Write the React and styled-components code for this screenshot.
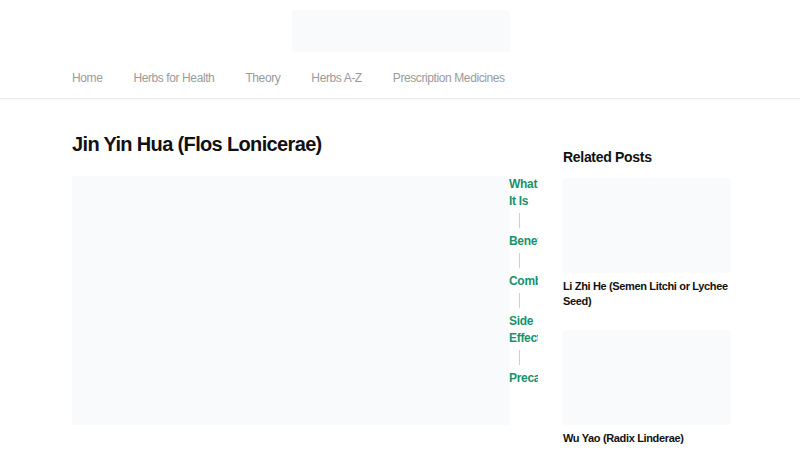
import styled, { createGlobalStyle } from 'styled-components'

const GlobalStyle = createGlobalStyle`
    body {
        margin: 0;
        background: #ffffff;
        font-family: "Liberation Sans", Arial, sans-serif;
    }
`;

const Header = styled.header`
    border-bottom: 1px solid #ececec;
    box-shadow: 0 1px 2px rgba(0, 0, 0, 0.03);
`;

const LogoRow = styled.div`
    display: flex;
    justify-content: center;
    padding-top: 10px;
`;

const Logo = styled.div`
    width: 218px;
    height: 42px;
    margin-left: 1px;
    background: #f9fafb;
    border-radius: 3px;
`;

const Nav = styled.nav`
    display: flex;
    gap: 31px;
    padding: 19px 0 0 72px;
    height: 27px;
`;

const NavLink = styled.a`
    color: #9a9a9a;
    font-size: 12px;
    line-height: 15px;
    letter-spacing: -0.4px;
    text-decoration: none;
`;

const Layout = styled.div`
    display: grid;
    grid-template-columns: 466px 168px;
    column-gap: 25px;
    margin-left: 72px;
    padding-top: 33px;
`;

const Title = styled.h1`
    margin: 0 0 20px;
    font-size: 20px;
    line-height: 24px;
    font-weight: 700;
    letter-spacing: -0.65px;
    color: #111111;
`;

const ContentRow = styled.div`
    display: grid;
    grid-template-columns: 437px 29px;
`;

const HeroImage = styled.div`
    height: 249px;
    background: #f9fafb;
`;

const Toc = styled.ul`
    list-style: none;
    margin: 0;
    padding: 0;
    overflow: hidden;
    display: flex;
    flex-direction: column;
`;

const TocItem = styled.li`
    color: #15936b;
    font-size: 12px;
    font-weight: 700;
    line-height: 17px;
    letter-spacing: -0.3px;
    white-space: ${props => props.$wrap ? 'normal' : 'nowrap'};
    width: 36px;
`;

const TocDivider = styled.li`
    width: 1px;
    height: 15px;
    margin: 3px 0 5px 10px;
    background: #cfcfcf;
`;

const Sidebar = styled.aside`
    padding-top: 17px;
`;

const SideTitle = styled.h2`
    margin: 0 0 12px;
    font-size: 14px;
    line-height: 17px;
    font-weight: 700;
    letter-spacing: -0.3px;
    color: #111111;
`;

const Card = styled.div`
    margin-bottom: 21px;
`;

const CardImage = styled.div`
    height: 95px;
    background: #f9fafb;
    border-radius: 3px;
`;

const CardTitle = styled.div`
    margin-top: 6px;
    font-size: 11px;
    line-height: 15px;
    font-weight: 700;
    letter-spacing: -0.35px;
    color: #111111;
`;

const navItems = ['Home', 'Herbs for Health', 'Theory', 'Herbs A-Z', 'Prescription Medicines']
const tocItems = ['What It Is', 'Benefits', 'Combinations', 'Side Effects', 'Precautions']
const related = ['Li Zhi He (Semen Litchi or Lychee Seed)', 'Wu Yao (Radix Linderae)']

export default function App() {
  return (
    <>
        <GlobalStyle />
        <Header>
            <LogoRow>
                <Logo />
            </LogoRow>
            <Nav>
                {navItems.map(item => (
                    <NavLink key={item} href="#">{item}</NavLink>
                ))}
            </Nav>
        </Header>
        <Layout>
            <main>
                <Title>Jin Yin Hua (Flos Lonicerae)</Title>
                <ContentRow>
                    <HeroImage />
                    <Toc>
                        {tocItems.flatMap((item, i) => [
                            i > 0 && <TocDivider key={'d' + i} />,
                            <TocItem key={item} $wrap={item.includes(' ')}>{item}</TocItem>
                        ])}
                    </Toc>
                </ContentRow>
            </main>
            <Sidebar>
                <SideTitle>Related Posts</SideTitle>
                {related.map(post => (
                    <Card key={post}>
                        <CardImage />
                        <CardTitle>{post}</CardTitle>
                    </Card>
                ))}
            </Sidebar>
        </Layout>
    </>
  )
}
